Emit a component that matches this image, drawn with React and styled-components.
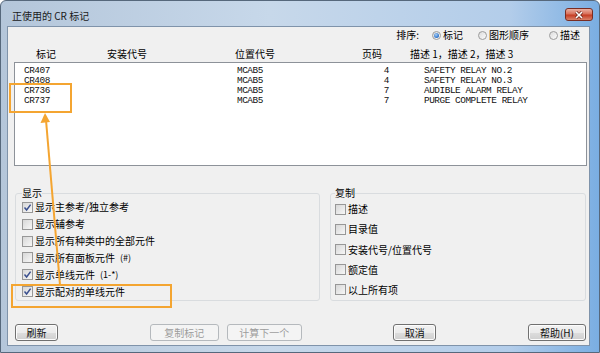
import React from "react";
import styled, { createGlobalStyle } from "styled-components";

const CJK = `"Noto Sans CJK SC", "Liberation Sans", sans-serif`;
const ORANGE = "#f4a531";

const GlobalStyle = createGlobalStyle`
	html, body {
		margin: 0;
		padding: 0;
		background: #ffffff;
	}
	body {
		font-family: ${CJK};
		font-size: 10px;
		color: #000;
	}
`;

const Window = styled.div`
	position: relative;
	box-sizing: border-box;
	width: 600px;
	height: 353px;
	display: flex;
	flex-direction: column;
	border: 1px solid #56687c;
	border-radius: 6px 6px 0 0;
	background: linear-gradient(90deg, #b4c6da 0%, #c7d8ea 45%, #b3cdea 85%, #7aaee2 100%);
	overflow: hidden;
`;

const TitleBar = styled.div`
	height: 25px;
	flex-shrink: 0;
	display: flex;
	align-items: flex-start;
	padding: 0 6px 0 11px;
`;

const Title = styled.span`
	margin-top: 9px;
	font-size: 10px;
	line-height: 12px;
	color: #1a1a1a;
`;

const CloseButton = styled.div`
	margin-left: auto;
	margin-top: 7px;
	box-sizing: border-box;
	width: 28px;
	height: 13px;
	border: 1px solid #7a2d22;
	border-radius: 3px;
	background: linear-gradient(#eab0a2 0%, #d8705a 45%, #c53d24 55%, #d9826a 100%);
	display: flex;
	align-items: center;
	justify-content: center;
`;

const Client = styled.div`
	flex: 1;
	display: flex;
	flex-direction: column;
	margin: 0 9px 6px 6px;
	border: 1px solid #7f93aa;
	background: #f0f0f0;
`;

const SortRow = styled.div`
	height: 14px;
	margin-top: 1px;
	display: flex;
	align-items: center;
	justify-content: flex-end;
	padding-right: 9px;
	line-height: 14px;
`;

const SortOption = styled.label`
	display: flex;
	align-items: center;
	gap: 2px;
	margin-left: ${({ $space }) => $space}px;
`;

const Radio = styled.span`
	position: relative;
	box-sizing: border-box;
	width: 9px;
	height: 9px;
	border-radius: 50%;
	border: 1px solid #9c9c9c;
	background: linear-gradient(135deg, #dcdcdc, #fbfbfb);

	&::after {
		content: "";
		display: ${({ $checked }) => ($checked ? "block" : "none")};
		position: absolute;
		left: 1px;
		top: 1px;
		width: 5px;
		height: 5px;
		border-radius: 50%;
		background: radial-gradient(circle at 40% 35%, #a9d0f5, #2b70c9 70%);
	}
`;

const HeaderRow = styled.div`
	display: grid;
	grid-template-columns: 71px 128px 127px 48px 1fr;
	height: 14px;
	margin-top: 5px;
	padding-left: 28px;
	line-height: 14px;
`;

const ListBox = styled.div`
	box-sizing: border-box;
	height: 104px;
	margin: 1px 2px 0 6px;
	padding-top: 3px;
	border: 1px solid #8d9299;
	background: #ffffff;
`;

const ListRow = styled.div`
	display: grid;
	grid-template-columns: 213px 123px 29px 35px 1fr;
	height: 10px;
	padding-left: 9px;
	font-family: "Liberation Mono", "DejaVu Sans Mono", monospace;
	font-size: 9.4px;
	letter-spacing: -0.45px;
	line-height: 10px;
	color: #111;
	white-space: nowrap;
`;

const PageCell = styled.span`
	text-align: right;
`;

const GroupRow = styled.div`
	display: flex;
	gap: 10px;
	margin: 21px 3px 0 7px;
`;

const Group = styled.fieldset`
	box-sizing: border-box;
	width: ${({ $width }) => $width}px;
	height: 114px;
	margin: 0;
	padding: 0 0 0 ${({ $inset }) => $inset}px;
	border: 1px solid #d9dcdf;
	border-radius: 3px;
	display: flex;
	flex-direction: column;
`;

const Legend = styled.legend`
	padding: 0;
	margin-left: 0;
	font-size: 10px;
	line-height: 12px;
`;

const CheckRow = styled.label`
	display: flex;
	align-items: center;
	gap: 2px;
	height: ${({ $pitch }) => $pitch}px;
	line-height: 12px;
	white-space: nowrap;
`;

const Box = styled.span`
	box-sizing: border-box;
	width: 11px;
	height: 11px;
	border: 1px solid #979797;
	background: linear-gradient(135deg, #d7d7d7, #f7f7f7);
	display: flex;
	align-items: center;
	justify-content: center;
`;

const Note = styled.span`
	font-size: 9px;
	margin-left: 3px;
`;

const ButtonRow = styled.div`
	display: flex;
	justify-content: space-between;
	margin: 23px 3px 0 7px;
`;

const ButtonGroup = styled.div`
	display: flex;
	gap: 8px;
`;

const Button = styled.div`
	box-sizing: border-box;
	width: ${({ $width }) => $width}px;
	height: 17px;
	border: 1px solid ${({ $disabled }) => ($disabled ? "#b5b9bd" : "#707070")};
	border-radius: 3px;
	background: ${({ $disabled }) =>
		$disabled ? "#f4f4f4" : "linear-gradient(#f2f2f2 0%, #ebebeb 50%, #dddddd 51%, #cfcfcf 100%)"};
	color: ${({ $disabled }) => ($disabled ? "#9c9c9c" : "#111")};
	display: flex;
	align-items: center;
	justify-content: center;
	line-height: 12px;
	box-shadow: inset 0 0 0 1px ${({ $disabled }) => ($disabled ? "transparent" : "#fcfcfc")};
`;

const Annotation = styled.svg`
	position: absolute;
	left: 0;
	top: 0;
	pointer-events: none;
`;

const Check = ({ checked }) => (
	<Box>
		{checked && (
			<svg width="9" height="9" viewBox="0 0 9 9">
				<path d="M1.5 4.6 L3.6 7 L7.6 1.6" fill="none" stroke="#3a4f8e" strokeWidth="1.5" />
			</svg>
		)}
	</Box>
);

const rows = [
	["CR407", "MCAB5", "4", "SAFETY RELAY NO.2"],
	["CR408", "MCAB5", "4", "SAFETY RELAY NO.3"],
	["CR736", "MCAB5", "7", "AUDIBLE ALARM RELAY"],
	["CR737", "MCAB5", "7", "PURGE COMPLETE RELAY"],
];

const displayOptions = [
	{ label: "显示主参考/独立参考", checked: true },
	{ label: "显示辅参考", checked: false },
	{ label: "显示所有种类中的全部元件", checked: false },
	{ label: "显示所有面板元件", note: "(#)", checked: false },
	{ label: "显示单线元件", note: "(1-*)", checked: true },
	{ label: "显示配对的单线元件", checked: true },
];

const copyOptions = ["描述", "目录值", "安装代号/位置代号", "额定值", "以上所有项"];

export default function App() {
	return (
		<>
			<GlobalStyle />
			<Window>
				<TitleBar>
					<Title>正使用的 CR 标记</Title>
					<CloseButton>
						<svg width="10" height="8" viewBox="0 0 10 8">
							<path d="M2 1 L8 7 M8 1 L2 7" stroke="#6b241a" strokeWidth="3" />
							<path d="M2 1 L8 7 M8 1 L2 7" stroke="#ffffff" strokeWidth="1.6" />
						</svg>
					</CloseButton>
				</TitleBar>
				<Client>
					<SortRow>
						<span>排序:</span>
						<SortOption $space={13}>
							<Radio $checked />
							标记
						</SortOption>
						<SortOption $space={15}>
							<Radio />
							图形顺序
						</SortOption>
						<SortOption $space={20}>
							<Radio />
							描述
						</SortOption>
					</SortRow>
					<HeaderRow>
						<span>标记</span>
						<span>安装代号</span>
						<span>位置代号</span>
						<span>页码</span>
						<span>描述 1，描述 2，描述 3</span>
					</HeaderRow>
					<ListBox>
						{rows.map(([tag, loc, page, desc]) => (
							<ListRow key={tag}>
								<span>{tag}</span>
								<span>{loc}</span>
								<PageCell>{page}</PageCell>
								<span />
								<span>{desc}</span>
							</ListRow>
						))}
					</ListBox>
					<GroupRow>
						<Group $width={305} $inset={6}>
							<Legend>显示</Legend>
							{displayOptions.map((o) => (
								<CheckRow key={o.label} $pitch={17}>
									<Check checked={o.checked} />
									{o.label}
									{o.note && <Note>{o.note}</Note>}
								</CheckRow>
							))}
						</Group>
						<Group $width={256} $inset={4}>
							<Legend>复制</Legend>
							{copyOptions.map((label) => (
								<CheckRow key={label} $pitch={21}>
									<Check />
									{label}
								</CheckRow>
							))}
						</Group>
					</GroupRow>
					<ButtonRow>
						<Button $width={43}>刷新</Button>
						<ButtonGroup>
							<Button $width={69} $disabled>复制标记</Button>
							<Button $width={75} $disabled>计算下一个</Button>
						</ButtonGroup>
						<Button $width={43}>取消</Button>
						<Button $width={58}>帮助(H)</Button>
					</ButtonRow>
				</Client>
				<Annotation width="600" height="353" viewBox="0 0 600 353">
					<rect x="9" y="83" width="61" height="28" fill="none" stroke={ORANGE} strokeWidth="2" />
					<rect x="11" y="284" width="159" height="22" fill="none" stroke={ORANGE} strokeWidth="2" />
					<line x1="45" y1="119" x2="59" y2="284" stroke={ORANGE} strokeWidth="2" />
					<polygon points="44,112 39.5,122 49,121" fill={ORANGE} />
				</Annotation>
			</Window>
		</>
	);
}
